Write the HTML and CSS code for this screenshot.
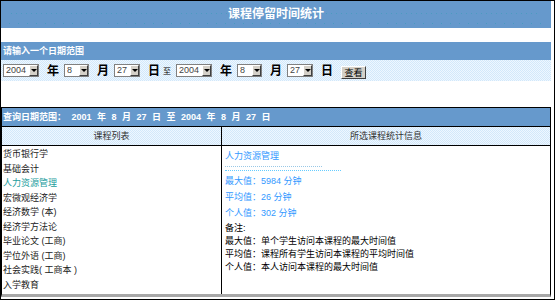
FILE: index.html
```html
<!DOCTYPE html>
<html lang="zh-CN">
<head>
    <meta charset="UTF-8">
    <title>课程停留时间统计</title>
    <link rel="stylesheet" href="styles.css">
</head>
<body>
<div class="page">
    <h1 class="title">课程停留时间统计</h1>

    <div class="range-head">请输入一个日期范围</div>
    <form class="range-row">
        <span class="sel sel-year"><select><option>2004</option></select><i class="drop"></i></span>
        <span class="unit">年</span>
        <span class="sel sel-month"><select><option>8</option></select><i class="drop"></i></span>
        <span class="unit">月</span>
        <span class="sel sel-day"><select><option>27</option></select><i class="drop"></i></span>
        <span class="unit end">日</span>
        <span class="to">至</span>
        <span class="sel sel-year"><select><option>2004</option></select><i class="drop"></i></span>
        <span class="unit">年</span>
        <span class="sel sel-month"><select><option>8</option></select><i class="drop"></i></span>
        <span class="unit">月</span>
        <span class="sel sel-day"><select><option>27</option></select><i class="drop"></i></span>
        <span class="unit end">日</span>
        <button class="btn" type="button">查看</button>
    </form>

    <div class="report">
        <div class="report-head">查询日期范围： 2001 年 8 月 27 日 至 2004 年 8 月 27 日</div>
        <div class="report-cols">
            <div class="col-head col-left">课程列表</div>
            <div class="col-head">所选课程统计信息</div>

            <ul class="course-list col-left">
                <li>货币银行学</li>
                <li>基础会计</li>
                <li class="current">人力资源管理</li>
                <li>宏微观经济学</li>
                <li>经济数学 (本)</li>
                <li>经济学方法论</li>
                <li>毕业论文 (工商)</li>
                <li>学位外语 (工商)</li>
                <li>社会实践( 工商本 )</li>
                <li>入学教育</li>
            </ul>

            <div class="stats">
                <div class="stats-name">人力资源管理</div>
                <div class="rule"></div>
                <div class="rule long"></div>
                <div class="stats-vals">
                    <div>最大值：5984 分钟</div>
                    <div>平均值：26 分钟</div>
                    <div>个人值：302 分钟</div>
                </div>
                <div class="notes">
                    <div>备注:</div>
                    <div>最大值：单个学生访问本课程的最大时间值</div>
                    <div>平均值：课程所有学生访问本课程的平均时间值</div>
                    <div>个人值：本人访问本课程的最大时间值</div>
                </div>
            </div>
        </div>
    </div>
</div>
</body>
</html>
```

FILE: styles.css
```css
* { box-sizing: border-box; }
body {
    margin: 0;
    font-family: "Liberation Sans", "Noto Sans CJK SC", sans-serif;
    font-size: 9px;
    color: #333;
    background: #fff;
}
.page {
    width: 555px;
    height: 300px;
    border: 1px solid #000;
    padding: 0 3px 0 0;
}
.title {
    margin: 0;
    height: 27px;
    line-height: 27px;
    text-align: center;
    font-size: 12px;
    font-weight: bold;
    color: #fff;
    background:
        repeating-linear-gradient(90deg, #4a9cc0 0 1px, transparent 1px 5px) 10px 12px / 530px 1px no-repeat,
        repeating-linear-gradient(90deg, #4a9cc0 0 1px, transparent 1px 9px) 8px 22px / 540px 1px no-repeat,
        #6699cc;
}
.range-head {
    margin-top: 14px;
    height: 18px;
    line-height: 18px;
    padding-left: 2px;
    font-weight: bold;
    color: #fff;
    background: #6699cc;
}
.range-row {
    margin: 0;
    height: 21px;
    display: flex;
    align-items: center;
    padding-left: 2px;
    background: repeating-conic-gradient(#d2e8fa 0 25%, #eef7ff 0 50%) 0 0 / 2px 2px;
}
.sel {
    display: inline-flex;
    height: 13px;
    border: 1px solid #808080;
    background: #fff;
}
.sel-year { width: 36px; }
.sel-month { width: 25px; }
.sel-day { width: 26px; }
.sel select {
    appearance: none;
    flex: 1;
    min-width: 0;
    height: 11px;
    margin: 0;
    padding: 0 0 0 2px;
    border: 0;
    font: 9px/11px "Liberation Sans", sans-serif;
    color: #444;
    background: transparent;
}
.drop {
    flex: none;
    width: 9px;
    display: flex;
    align-items: center;
    justify-content: center;
    background: #d4d0c8;
    border: 1px solid;
    border-color: #fff #404040 #404040 #fff;
}
.drop::after {
    content: "";
    border-left: 3px solid transparent;
    border-right: 3px solid transparent;
    border-top: 3px solid #000;
}
.unit {
    margin: 0 5px 0 8px;
    font-size: 12px;
    font-weight: bold;
    line-height: 1;
    color: #000;
}
.unit.end { margin-right: 3px; }
.to {
    margin-right: 5px;
    font-size: 8px;
    color: #000;
}
.btn {
    margin: 3px 0 0 5px;
    width: 25px;
    height: 13px;
    padding: 0;
    font: 9px/11px "Noto Sans CJK SC", sans-serif;
    color: #000;
    background: #d4d0c8;
    border: 1px solid;
    border-color: #fff #404040 #404040 #fff;
}
.report {
    margin-top: 26px;
    border: 1px solid #000;
    border-bottom: 3px solid #a8a8a8;
}
.report-head {
    height: 19px;
    line-height: 18px;
    padding-left: 1px;
    font-weight: bold;
    word-spacing: 3px;
    color: #fff;
    background: #6699cc;
    border-bottom: 1px solid #000;
}
.report-cols {
    display: grid;
    grid-template-columns: 220px 1fr;
}
.col-head {
    height: 19px;
    line-height: 18px;
    text-align: center;
    border-bottom: 1px solid #000;
    background: repeating-conic-gradient(#d2e8fa 0 25%, #eef7ff 0 50%) 0 0 / 2px 2px;
}
.col-left { border-right: 1px solid #000; }
.course-list {
    margin: 0;
    height: 148px;
    padding: 1px 0 0 1px;
    list-style: none;
    line-height: 14.5px;
    color: #222;
}
.course-list .current { color: #1a9c9c; }
.stats {
    padding: 3px 0 0 3px;
    color: #3399ff;
}
.stats-name { line-height: 15px; }
.rule {
    width: 97px;
    margin-top: 2px;
    border-top: 1px dotted #99c8e6;
}
.rule.long {
    width: 116px;
    margin-top: 3px;
    border-top-color: #66ccff;
}
.stats-vals {
    margin-top: 2px;
    line-height: 16px;
}
.notes {
    margin-top: 1px;
    line-height: 13px;
    color: #000;
}
```
